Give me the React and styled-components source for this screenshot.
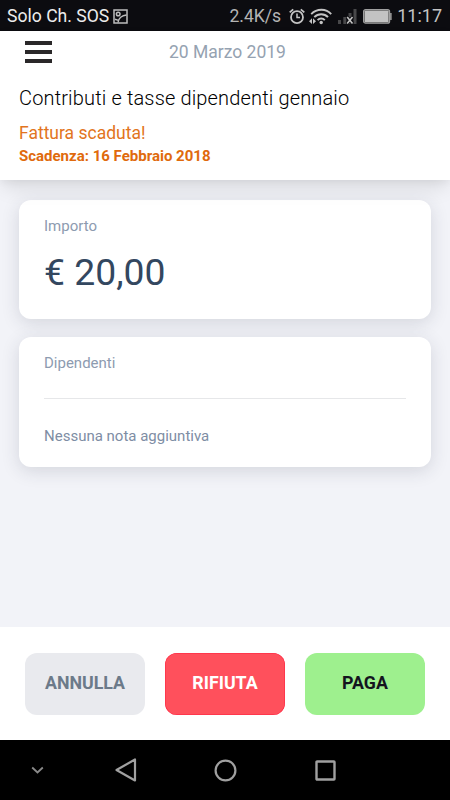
import React from "react";
import styled, { createGlobalStyle } from "styled-components";

const actions = [
    { label: "ANNULLA", bg: "#e9eaee", color: "#6c7a89" },
    { label: "RIFIUTA", bg: "#ff505c", color: "#ffffff", edge: "#ff1f3d" },
    { label: "PAGA", bg: "#9ef08e", color: "#14141e" },
];

function PictureIcon(){
    return(
        <svg width="15" height="15" viewBox="0 0 15 15" fill="none" stroke="#bdbdbd" strokeWidth="1.5">
            <rect x="1" y="1" width="13" height="13"/>
            <circle cx="5.2" cy="5" r="1.8"/>
            <path d="M5 13.5C5.5 9.5 9 6.5 13.5 6M2 10.2l3.4 1.2"/>
        </svg>
    )
}

function AlarmIcon(){
    return(
        <svg width="16" height="17" viewBox="0 0 16 17" fill="none" stroke="#c4c4c4" strokeWidth="1.8">
            <circle cx="8" cy="9.2" r="6"/>
            <path d="M8 5.6v4h3" strokeWidth="1.5"/>
            <path d="M.7 4.4L4.2 1.4M15.3 4.4L11.8 1.4"/>
        </svg>
    )
}

function WifiIcon(){
    return(
        <svg width="23" height="17" viewBox="0 0 23 17" fill="none" stroke="#c4c4c4" strokeWidth="1.9">
            <path d="M2.2 6.1C7.8.3 17.2.3 22.2 6.1"/>
            <path d="M5.3 9.2c3.7-4 10.1-4 13.7 0"/>
            <path d="M8.6 12.1c2-2.2 5.2-2.2 7.2 0"/>
            <circle cx="12.2" cy="14.5" r="1.7" fill="#c4c4c4" stroke="none"/>
            <path d="M0 13.2l3-2.9v5.8zM7 13.2l-3-2.9v5.8z" fill="#c4c4c4" stroke="none"/>
        </svg>
    )
}

function SignalIcon(){
    return(
        <svg width="19" height="17" viewBox="0 0 19 17">
            <path d="M0 12h3v4H0zM5.3 9h3v7h-3zM10.5 5h3v11h-3zM15.5 1h3v15h-3z" fill="#48484a"/>
            <path d="M9.2 9l5.3 6.4M14.5 9l-5.3 6.4" stroke="#0c0c10" strokeWidth="3.5"/>
            <path d="M9.2 9l5.3 6.4M14.5 9l-5.3 6.4" stroke="#c4c4c4" strokeWidth="1.6"/>
        </svg>
    )
}

function BatteryIcon(){
    return(
        <svg width="29" height="15" viewBox="0 0 29 15">
            <rect x=".6" y=".6" width="26" height="13.6" rx="2" fill="#555" stroke="#a0a0a0" strokeWidth="1.2"/>
            <rect x="1.8" y="1.8" width="23.6" height="11.2" rx=".5" fill="#c3c3c3"/>
            <path d="M27.2 4h1.4v7h-1.4z" fill="#aaa"/>
        </svg>
    )
}

export default function App(){
    return(
    <>
    <GlobalStyle />
    <Screen>
        <StatusBar>
            <Carrier>Solo Ch. SOS</Carrier>
            <PictureIcon />
            <StatusRight>
                <Speed>2.4K/s</Speed>
                <StatusIcons>
                    <AlarmIcon />
                    <WifiIcon />
                    <SignalIcon />
                    <BatteryIcon />
                </StatusIcons>
                <Clock>11:17</Clock>
            </StatusRight>
        </StatusBar>
        <Header>
            <TopRow>
                <MenuButton aria-label="Menu">
                    <span /><span /><span />
                </MenuButton>
                <Today>20 Marzo 2019</Today>
            </TopRow>
            <Title>Contributi e tasse dipendenti gennaio</Title>
            <Expired>Fattura scaduta!</Expired>
            <DueDate>Scadenza: 16 Febbraio 2018</DueDate>
        </Header>
        <Content>
            <Card $height="119px">
                <Label>Importo</Label>
                <Amount>€ 20,00</Amount>
            </Card>
            <Card $height="130px">
                <Label>Dipendenti</Label>
                <Divider />
                <Note>Nessuna nota aggiuntiva</Note>
            </Card>
        </Content>
        <Footer>
            {actions.map((action) => (
                <ActionButton key={action.label} $bg={action.bg} $color={action.color} $edge={action.edge}>
                    {action.label}
                </ActionButton>
            ))}
        </Footer>
        <NavBar>
            <svg width="13" height="9" viewBox="0 0 13 9" fill="none" stroke="#8a8a8a" strokeWidth="1.8">
                <path d="M1.2 1.5l5.3 5 5.3-5"/>
            </svg>
            <svg width="22" height="24" viewBox="0 0 22 24" fill="none" stroke="#a0a0a0" strokeWidth="2.2" strokeLinejoin="round">
                <path d="M20 1.5v21L1.5 12z"/>
            </svg>
            <svg width="23" height="23" viewBox="0 0 23 23" fill="none" stroke="#a0a0a0" strokeWidth="2.2">
                <circle cx="11.5" cy="11.5" r="9.9"/>
            </svg>
            <svg width="21" height="21" viewBox="0 0 21 21" fill="none" stroke="#a0a0a0" strokeWidth="2.4">
                <rect x="1.5" y="1.5" width="18" height="18" rx=".6"/>
            </svg>
        </NavBar>
    </Screen>
    </>
    )
}

const GlobalStyle = createGlobalStyle`
    * {
        box-sizing: border-box;
    }
    body {
        margin: 0;
        font-family: Roboto, sans-serif;
    }
`;

const Screen = styled.div`
    width: 450px;
    height: 800px;
    display: flex;
    flex-direction: column;
    overflow: hidden;
    background-color: #f2f3f8;
`;

const StatusBar = styled.div`
    flex: none;
    height: 31px;
    padding: 1px 8px 0 7px;
    display: flex;
    align-items: center;
    gap: 4px;
    background-color: #0c0c10;
    white-space: nowrap;
    svg {
        flex: none;
    }
`;

const Carrier = styled.span`
    font-size: 17.6px;
    line-height: 22px;
    color: #ececec;
`;

const StatusRight = styled.div`
    margin-left: auto;
    display: flex;
    align-items: center;
`;

const StatusIcons = styled.div`
    display: flex;
    align-items: center;
    margin: 0 5px 0 8px;
    svg + svg {
        margin-left: 6px;
    }
    svg:nth-child(2) {
        margin-left: 4px;
    }
`;

const Speed = styled.span`
    font-size: 17.6px;
    line-height: 22px;
    color: #b4b4b4;
`;

const Clock = styled.span`
    font-size: 18px;
    line-height: 22px;
    color: #c4c4c4;
`;

const Header = styled.header`
    flex: none;
    position: relative;
    height: 149px;
    padding: 0 19px;
    display: flex;
    flex-direction: column;
    background-color: #fff;
    box-shadow: 0 12px 18px -4px rgba(0, 0, 0, 0.1), 0 2px 8px rgba(0, 0, 0, 0.05);
`;

const TopRow = styled.div`
    height: 42px;
    padding-left: 6px;
    display: flex;
    align-items: center;
`;

const MenuButton = styled.button`
    width: 27px;
    padding: 0;
    border: 0;
    background: none;
    display: flex;
    flex-direction: column;
    gap: 5px;
    span {
        height: 4px;
        background-color: #2a2829;
    }
`;

const Today = styled.span`
    margin-left: 117px;
    font-size: 17.5px;
    line-height: 22px;
    color: #95a2b1;
`;

const Title = styled.h1`
    margin: 13px 0 0;
    font-size: 20px;
    font-weight: 300;
    line-height: 24px;
    letter-spacing: 0.15px;
    color: #000;
    white-space: nowrap;
`;

const Expired = styled.p`
    margin: 12px 0 0;
    font-size: 17.5px;
    font-weight: 400;
    line-height: 22px;
    color: #e27420;
`;

const DueDate = styled.p`
    margin: 3px 0 0;
    font-size: 15px;
    font-weight: 700;
    line-height: 18px;
    color: #e06a0c;
`;

const Content = styled.main`
    flex: 1;
    padding: 20px 19px 0;
    display: flex;
    flex-direction: column;
    gap: 18px;
`;

const Card = styled.section`
    height: ${({ $height }) => $height};
    padding: 17px 25px 0;
    border-radius: 12px;
    background-color: #fff;
    box-shadow: 0 4px 18px rgba(40, 45, 65, 0.15);
`;

const Label = styled.p`
    margin: 0;
    font-size: 15px;
    line-height: 18px;
    color: #8d9bb0;
`;

const Amount = styled.p`
    margin: 15px 0 0;
    font-size: 37.3px;
    font-weight: 400;
    line-height: 44px;
    color: #33475f;
`;

const Divider = styled.hr`
    height: 1px;
    margin: 26px 0 28px;
    border: 0;
    background-color: #e6e7e9;
`;

const Note = styled.p`
    margin: 0;
    font-size: 15px;
    line-height: 18px;
    color: #7e8da4;
`;

const Footer = styled.footer`
    flex: none;
    height: 113px;
    padding: 25.5px 25px;
    display: grid;
    grid-template-columns: repeat(3, 1fr);
    gap: 20px;
    background-color: #fff;
`;

const ActionButton = styled.button`
    padding: 0 0 2px;
    border: 0;
    border-radius: 12px;
    background-color: ${({ $bg }) => $bg};
    box-shadow: ${({ $edge }) => $edge ? `inset 0 0 0 0.5px ${$edge}` : "none"};
    color: ${({ $color }) => $color};
    font-family: inherit;
    font-size: 17.8px;
    font-weight: 700;
`;

const NavBar = styled.nav`
    flex: none;
    height: 60px;
    padding-left: 31px;
    display: flex;
    align-items: center;
    background-color: #000;
    svg:nth-child(2) {
        margin-left: 71px;
    }
    svg:nth-child(3) {
        margin-left: 77px;
    }
    svg:nth-child(4) {
        margin-left: 78px;
    }
`;
